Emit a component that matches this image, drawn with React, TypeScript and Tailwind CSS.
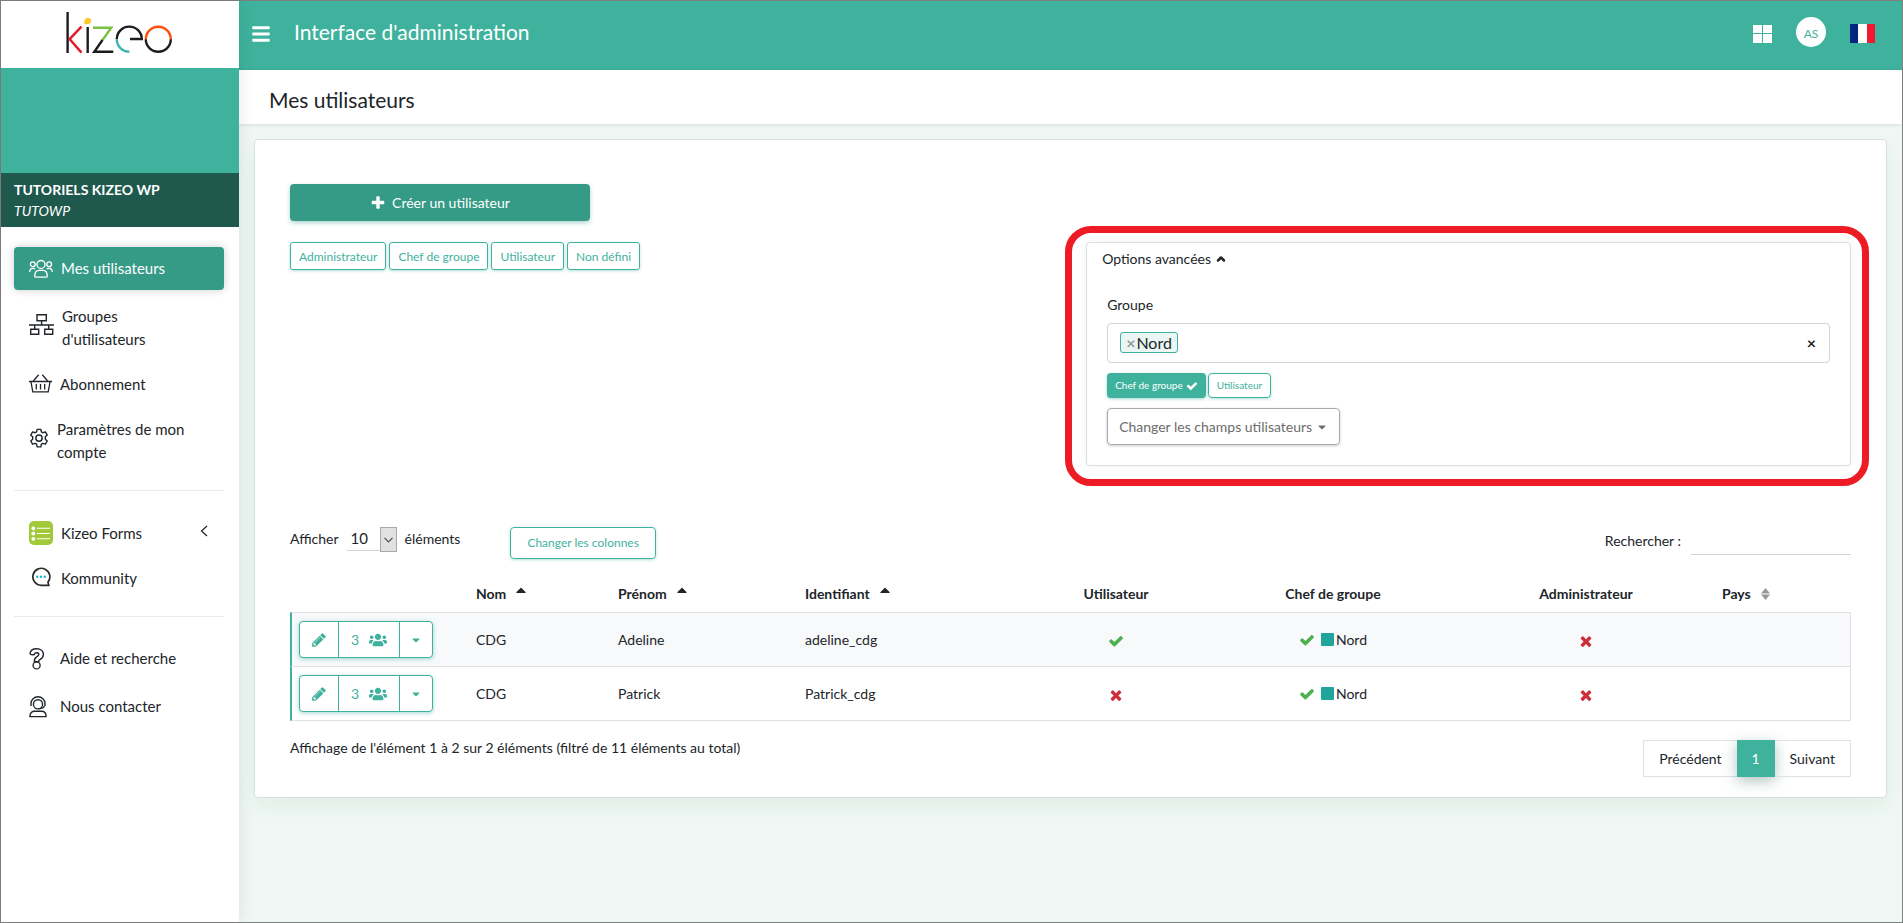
import { type ReactNode } from 'react';
import { FaBars, FaCaretDown, FaCaretUp, FaUsers } from 'react-icons/fa';
import { ChevronUp } from 'lucide-react';

interface User {
  nom: string;
  prenom: string;
  identifiant: string;
  utilisateur: boolean;
  groupe: string;
}

const users: User[] = [
  { nom: 'CDG', prenom: 'Adeline', identifiant: 'adeline_cdg', utilisateur: true, groupe: 'Nord' },
  { nom: 'CDG', prenom: 'Patrick', identifiant: 'Patrick_cdg', utilisateur: false, groupe: 'Nord' },
];

const roles = ['Administrateur', 'Chef de groupe', 'Utilisateur', 'Non défini'];

const glyphs = {
  check:
    'M1671 566q0 40-28 68l-724 724-136 136q-28 28-68 28t-68-28l-136-136-362-362q-28-28-28-68t28-68l136-136q28-28 68-28t68 28l294 295 656-657q28-28 68-28t68 28l136 136q28 28 28 68z',
  times:
    'M1490 1322q0 40-28 68l-136 136q-28 28-68 28t-68-28l-294-294-294 294q-28 28-68 28t-68-28l-136-136q-28-28-28-68t28-68l294-294-294-294q-28-28-28-68t28-68l136-136q28-28 68-28t68 28l294 294 294-294q28-28 68-28t68 28l136 136q28 28 28 68t-28 68l-294 294 294 294q28 28 28 68z',
  plus:
    'M1600 736v192q0 40-28 68t-68 28h-416v416q0 40-28 68t-68 28h-192q-40 0-68-28t-28-68v-416h-416q-40 0-68-28t-28-68v-192q0-40 28-68t68-28h416v-416q0-40 28-68t68-28h192q40 0 68 28t28 68v416h416q40 0 68 28t28 68z',
  pencil:
    'M491 1536l91-91-235-235-91 91v107h128v128h107zm523-928q0-22-22-22-10 0-17 7l-542 542q-7 7-7 17 0 22 22 22 10 0 17-7l542-542q7-7 7-17zm-54-192l416 416-832 832h-416v-416zm683 96q0 53-37 90l-166 166-416-416 166-165q36-38 90-38 53 0 91 38l235 234q37 39 37 91z',
};

function Glyph({ name, className }: { name: keyof typeof glyphs; className: string }) {
  return (
    <svg className={className} viewBox="0 0 1792 1792" fill="currentColor" aria-hidden="true">
      <path d={glyphs[name]} />
    </svg>
  );
}

function Logo() {
  return (
    <svg width="108" height="42" viewBox="0 0 108 42" fill="none" strokeWidth="2.4" role="img" aria-label="kizeo">
      <path d="M1.6 0v41" stroke="#1d1d1d" />
      <path d="M15.500 14.600 3.600 27.100 15.500 40.600" stroke="#e01b2b" />
      <path d="M18.300 12c-.4-2 .2-6.200 3.600-6.200 2 0 3.200 1.400 3.200 3.100 0 2.900-3.200 3.700-6.800 3.100Z" fill="#ffc72c" />
      <path d="M21.700 15V41" stroke="#1d1d1d" />
      <path d="M27 15.800h18.300L36.500 28" stroke="#7cc242" />
      <path d="M36.500 28 28.300 39.700h19" stroke="#1d1d1d" />
      <path d="M50.800 27.200a12.500 12.500 0 0 1 25 -.2H64" stroke="#1d1d1d" />
      <path d="M50.800 27.200a12.500 12.500 0 0 0 12.500 12.500" stroke="#3bb5b0" />
      <path d="M79.800 27.200a12.500 12.500 0 0 1 25 0" stroke="#ff4e0d" />
      <path d="M79.800 27.200a12.500 12.500 0 0 0 25 0" stroke="#1d1d1d" />
    </svg>
  );
}

function TeamIcon() {
  return (
    <svg width="24" height="20" viewBox="0 0 25 20" fill="none" stroke="currentColor" strokeWidth="1.4">
      <circle cx="12.500" cy="5.300" r="4.200" />
      <circle cx="4" cy="5" r="2.500" />
      <circle cx="21" cy="5" r="2.500" />
      <path d="M6 17.200c0-3.700 1.700-5.700 4.500-5.700h4c2.800 0 4.500 2 4.500 5.700 0 .8-.5 1.300-1.300 1.300H7.300c-.8 0-1.300-.5-1.300-1.300Z" />
      <path d="M.8 13c0-2.500 1.200-3.700 3.200-3.700 1 0 1.800.3 2.400.8M24.200 13c0-2.500-1.200-3.700-3.200-3.700-1 0-1.800.3-2.400.8" />
    </svg>
  );
}

function NetworkIcon() {
  return (
    <svg width="25" height="29" viewBox="0 0 25 29" fill="none" stroke="currentColor" strokeWidth="1.4">
      <path d="M8 .8h9.300v6H8zM1.700 15.300h8v5h-8zM15.700 15.300h8v5h-8z" />
      <path d="M12.600 7v4M0 11h25M5.700 11v4M19.700 11v4" />
    </svg>
  );
}

function BasketIcon() {
  return (
    <svg width="23" height="22" viewBox="0 0 23 22" fill="none" stroke="currentColor" strokeWidth="1.3">
      <path d="M0 7.500h23M2 8l1.800 9.800h15.400L21 8" />
      <path d="M4.300 7 9.700.8M18.700 7 13.300.8M7.300 10v5.500M11.500 10v5.500M15.700 10v5.500" />
    </svg>
  );
}

function GearIcon() {
  return (
    <svg width="20" height="26" viewBox="0 0 24 31" fill="none" stroke="currentColor" strokeWidth="1.7" strokeLinejoin="round">
      <path d="M9.800 1.500h4.400l.7 3.100 1.800 1 3-1 2.200 3.800-2.300 2.100v2.900l2.300 2.100-2.200 3.800-3-1-1.800 1-.7 3.200H9.800l-.7-3.200-1.800-1-3 1-2.200-3.800 2.300-2.100v-2.900L2.100 8.400l2.200-3.800 3 1 1.800-1Z" />
      <circle cx="12" cy="12" r="3.800" />
    </svg>
  );
}

function FormsIcon() {
  return (
    <svg width="24" height="24" viewBox="0 0 24 24">
      <rect width="24" height="24" rx="5" fill="#a2c93a" />
      <g fill="#fff">
        <circle cx="4.300" cy="7.300" r="1.900" />
        <circle cx="4.300" cy="12.500" r="1.900" />
        <circle cx="4.300" cy="17.800" r="1.900" />
        <path d="M8 6.800h13v1H8zM8 12h13v1H8zM8 17.300h13v1H8z" />
      </g>
    </svg>
  );
}

function ChatIcon() {
  return (
    <svg width="24" height="23" viewBox="0 0 24 23" fill="none">
      <path d="M18.700 18.300h-6.500a8.500 8.500 0 1 1 6.800-3.200l.8 3.200Z" stroke="#2b2b2b" strokeWidth="1.7" />
      <g fill="#1fb5d6">
        <circle cx="8.300" cy="9.800" r="1.200" />
        <circle cx="12" cy="9.800" r="1.200" />
        <circle cx="15.700" cy="9.800" r="1.200" />
      </g>
    </svg>
  );
}

function HelpIcon() {
  return (
    <svg width="23" height="22" viewBox="0 0 23 22" fill="none" stroke="currentColor" strokeWidth="1.4">
      <path d="M1 5.500C1.500 2.400 4 .8 7.600.8c4 0 6.800 2.200 6.800 5.600 0 3.600-3 4.600-4.100 5.600-.5.500-.5 1.200-.6 1.800H5.400c-.2-2.600.3-3.900 2.300-5C9 8 9.800 7.400 9.800 6.400c0-1-.9-1.700-2.200-1.700-1.500 0-2.100.8-2.300 1.900-1.800.3-4.100.2-4.300-1.100Z" />
      <circle cx="7.600" cy="17.400" r="3.500" />
    </svg>
  );
}

function SupportIcon() {
  return (
    <svg width="23" height="22" viewBox="0 0 23 22" fill="none" stroke="currentColor" strokeWidth="1.4">
      <path d="M2 10V7.500a7 6.700 0 0 1 14 0V10" />
      <circle cx="9" cy="8.300" r="4.600" />
      <path d="M15.500 10c-1 2.400-3.500 2.700-6 2.600M1 20c0-3.200 2-4.800 4.500-4.800h7c2.500 0 4.500 1.600 4.500 4.800v.6H1Z" />
    </svg>
  );
}

function NavItem({ icon, active, expandable, children }: { icon: ReactNode; active?: boolean; expandable?: boolean; children: ReactNode }) {
  return (
    <li>
      <a
        href="#"
        className={`flex items-center gap-2 rounded px-[15px] py-[10px] text-[15px] leading-[23px] ${
          active ? 'mb-[3px] bg-[#359a86] text-white shadow-[0_0_8px_rgba(0,0,0,0.2)]' : 'text-[#212529]'
        }`}
      >
        <span className="flex-shrink-0">{icon}</span>
        <span className="max-w-[136px]">{children}</span>
        {expandable && (
          <svg className="mb-1 ml-auto" width="9" height="12" viewBox="0 0 9 12" fill="none" stroke="currentColor" strokeWidth="1.2">
            <path d="M7 1 1.500 6 7 11" />
          </svg>
        )}
      </a>
    </li>
  );
}

function Sidebar() {
  return (
    <aside className="relative z-10 w-[238px] flex-shrink-0 bg-white shadow-[0_0_16px_rgba(0,0,0,0.1)]">
      <div className="flex h-[67px] items-center justify-center pb-1">
        <Logo />
      </div>
      <div className="h-[105px] bg-[#3fb29d]" />
      <div className="h-[54px] bg-[#1f594d] px-[13px] py-[6px] text-sm leading-[21px] text-white">
        <div className="font-bold">TUTORIELS KIZEO WP</div>
        <div className="italic">TUTOWP</div>
      </div>
      <nav className="pt-5 pr-[15px] pl-[13px]">
        <ul className="flex flex-col gap-[2px]">
          <NavItem icon={<TeamIcon />} active>Mes utilisateurs</NavItem>
          <NavItem icon={<NetworkIcon />}>Groupes d'utilisateurs</NavItem>
          <NavItem icon={<BasketIcon />}>Abonnement</NavItem>
          <NavItem icon={<GearIcon />}>Paramètres de mon compte</NavItem>
        </ul>
        <ul className="mt-4 flex flex-col gap-[2px] border-t border-[#ebebeb] pt-5">
          <NavItem icon={<FormsIcon />} expandable>Kizeo Forms</NavItem>
          <NavItem icon={<ChatIcon />}>Kommunity</NavItem>
        </ul>
        <ul className="mt-4 flex flex-col gap-[5px] border-t border-[#ebebeb] pt-5">
          <NavItem icon={<HelpIcon />}>Aide et recherche</NavItem>
          <NavItem icon={<SupportIcon />}>Nous contacter</NavItem>
        </ul>
      </nav>
    </aside>
  );
}

function Header() {
  return (
    <header className="flex h-[69px] items-center bg-[#3fb29d] pr-[27px] pb-1 pl-[13px] text-white">
      <button type="button" aria-label="Menu">
        <FaBars className="h-5 w-[18px]" />
      </button>
      <span className="ml-6 pb-1 text-[21px]">Interface d'administration</span>
      <div className="ml-auto flex items-center gap-6">
        <button type="button" aria-label="Applications">
          <svg width="19" height="18" viewBox="0 0 19 18" fill="currentColor">
            <path d="M0 0h9v8H0zM10 0h9v8h-9zM0 9h9v9H0zM10 9h9v9h-9z" />
          </svg>
        </button>
        <button type="button" className="mb-1 h-[30px] w-[30px] rounded-full bg-white pt-1 text-xs text-[#3fb29d]">
          AS
        </button>
        <button type="button" aria-label="Français">
          <svg width="25" height="19" viewBox="0 0 25 19">
            <path d="M0 0h25v19H0z" fill="#fff" />
            <path d="M0 0h8v19H0z" fill="#00267f" />
            <path d="M17 0h8v19h-8z" fill="#f31830" />
          </svg>
        </button>
      </div>
    </header>
  );
}

function AdvancedOptions() {
  return (
    <section className="relative w-[49%] rounded border border-[#d6dfe2] bg-white px-4 pb-5 shadow-[0_0_12px_rgba(0,0,0,0.05)]">
      <div className="pointer-events-none absolute -top-[17px] -right-[19px] -bottom-[21px] -left-[22px] rounded-[26px] border-[7px] border-[#ed1c24]" />
      <button type="button" className="-ml-px flex h-8 items-center gap-1">
        Options avancées <ChevronUp className="h-3 w-3" strokeWidth={5} />
      </button>
      <div className="mt-5 ml-1 pr-1">
        <label htmlFor="groupe" className="block leading-5">Groupe</label>
        <div className="mt-2 flex h-10 items-center rounded border border-[#ced4da] pr-[13px] pb-px pl-3">
          <span className="flex h-[21px] flex-shrink-0 items-center rounded-[3px] border border-[#3fb29d] bg-[#eaf6f3] px-[5px] text-base">
            <button type="button" aria-label="Retirer Nord" className="mr-px font-bold text-[#999999]">×</button>
            Nord
          </span>
          <input id="groupe" type="text" className="min-w-0 flex-1 px-2 outline-none" />
          <button type="button" aria-label="Tout effacer" className="text-base font-bold">×</button>
        </div>
        <div className="mt-[10px] flex gap-[2px] text-[10px]">
          <button type="button" className="flex h-[25px] items-center gap-[3px] rounded bg-[#3fb29d] px-2 text-white shadow-[0_1px_3px_rgba(63,178,157,0.5)]">
            Chef de groupe <Glyph name="check" className="h-3 w-3" />
          </button>
          <button type="button" className="h-[25px] rounded border border-[#3fb29d] px-2 text-[#3fb29d] shadow-[0_1px_3px_rgba(63,178,157,0.4)]">
            Utilisateur
          </button>
        </div>
        <button type="button" className="mt-[10px] flex h-[37px] items-center gap-1 rounded border border-[#a9a9a9] px-[11px] text-[#6c6c6c] shadow-[0_1px_3px_rgba(0,0,0,0.2)]">
          Changer les champs utilisateurs <FaCaretDown className="h-3 w-3" />
        </button>
      </div>
    </section>
  );
}

function SortedHeader({ children }: { children: ReactNode }) {
  return (
    <th className="pl-3 text-left">
      <span className="flex items-center gap-2">
        {children} <FaCaretUp className="mb-2 h-4 w-[14px]" />
      </span>
    </th>
  );
}

function Status({ ok }: { ok: boolean }) {
  return (
    <span role="img" aria-label={ok ? 'Oui' : 'Non'} className={`inline-block align-middle ${ok ? 'text-[#4caf50]' : 'text-[#cb2f3c]'}`}>
      <Glyph name={ok ? 'check' : 'times'} className="h-4 w-4" />
    </span>
  );
}

function UsersTable() {
  return (
    <table className="mt-4 w-full table-fixed border-separate border-spacing-0">
      <colgroup>
        <col className="w-[174px]" />
        <col className="w-[142px]" />
        <col className="w-[187px]" />
        <col className="w-[235px]" />
        <col className="w-[176px]" />
        <col className="w-[258px]" />
        <col className="w-[248px]" />
        <col className="w-[141px]" />
      </colgroup>
      <thead>
        <tr className="h-[37px]">
          <td />
          <SortedHeader>Nom</SortedHeader>
          <SortedHeader>Prénom</SortedHeader>
          <SortedHeader>Identifiant</SortedHeader>
          <th>Utilisateur</th>
          <th>Chef de groupe</th>
          <th>Administrateur</th>
          <th className="pl-3 text-left">
            <span className="flex items-center gap-[10px]">
              Pays
              <svg width="9" height="12" viewBox="0 0 9 12" fill="#999999">
                <path d="M4.500 0 9 5.500H0zM4.500 12 0 6.500h9z" />
              </svg>
            </span>
          </th>
        </tr>
      </thead>
      <tbody>
        {users.map((user) => (
          <tr
            key={user.identifiant}
            className="h-[54px] odd:bg-[#f8f9fb] last:h-[55px] [&>td]:border-t [&>td]:border-[#dee2e6] last:[&>td]:border-b"
          >
            <td className="border-l-2 border-l-[#3fb29d]! pl-[7px]">
              <div className="inline-flex h-[37px] divide-x divide-[#3fb29d] rounded border border-[#3fb29d] bg-white align-middle text-[#3fb29d] shadow-[0_1px_4px_rgba(63,178,157,0.5)]">
                <button type="button" aria-label="Modifier" className="px-[11px]">
                  <Glyph name="pencil" className="h-4 w-4" />
                </button>
                <button type="button" className="flex items-center gap-[10px] px-3">
                  3 <FaUsers className="h-[18px] w-[18px]" />
                </button>
                <button type="button" aria-label="Plus d'actions" className="px-[10px]">
                  <FaCaretDown className="h-3 w-3" />
                </button>
              </div>
            </td>
            <td className="pl-3">{user.nom}</td>
            <td className="pl-3">{user.prenom}</td>
            <td className="pl-3">{user.identifiant}</td>
            <td className="text-center"><Status ok={user.utilisateur} /></td>
            <td>
              <div className="flex items-center justify-center">
                <Status ok />
                <span className="mr-[2px] ml-[6px] h-[13px] w-[13px] rounded-[1px] bg-[#20a49b]" />
                {user.groupe}
              </div>
            </td>
            <td className="text-center"><Status ok={false} /></td>
            <td className="border-r" />
          </tr>
        ))}
      </tbody>
    </table>
  );
}

export default function App() {
  return (
    <div className="flex min-h-screen border border-[#808080] bg-[#eff8f4] font-['Lato',sans-serif] text-sm text-[#212529]">
      <Sidebar />
      <div className="min-w-0 flex-1">
        <Header />
        <div className="flex h-[54px] items-center bg-white px-[30px] pt-[6px] shadow-[0_1px_4px_rgba(0,0,0,0.1)]">
          <h1 className="text-[21px]">Mes utilisateurs</h1>
        </div>
        <main className="m-[15px] rounded border border-[#d6dfe2] bg-white px-[35px] pt-11 pb-5 shadow-[0_8px_24px_rgba(0,60,40,0.06)]">
          <button type="button" className="flex h-[37px] w-[300px] items-center justify-center gap-[6px] rounded bg-[#359a86] text-white shadow-[0_2px_4px_rgba(53,154,134,0.4)]">
            <Glyph name="plus" className="h-4 w-4" /> Créer un utilisateur
          </button>
          <div className="mt-[21px] flex items-start justify-between">
            <div className="flex gap-[3px] text-xs">
              {roles.map((role) => (
                <button key={role} type="button" className="h-7 rounded-[3px] border border-[#3fb29d] px-2 pt-px text-[#3fb29d] shadow-[0_1px_3px_rgba(63,178,157,0.4)]">
                  {role}
                </button>
              ))}
            </div>
            <AdvancedOptions />
          </div>

          <div className="mt-[61px] flex items-start">
            <label htmlFor="longueur" className="leading-6">Afficher</label>
            <div className="relative mx-2">
              <select id="longueur" className="h-6 w-[50px] appearance-none border-b border-[#ced4da] pl-1 text-[15px] outline-none">
                <option>10</option>
              </select>
              <span className="pointer-events-none absolute top-0 right-0 flex h-[25px] w-[17px] items-center justify-center border border-[#a9a9a9] bg-[#e1e1e1]">
                <svg width="9" height="6" viewBox="0 0 9 6" fill="none" stroke="#505050" strokeWidth="1.2">
                  <path d="m.5.8 4 4 4-4" />
                </svg>
              </span>
            </div>
            <span className="leading-6">éléments</span>
            <button type="button" className="ml-[50px] h-8 rounded border border-[#3fb29d] px-4 text-xs text-[#3fb29d] shadow-[0_1px_3px_rgba(63,178,157,0.4)]">
              Changer les colonnes
            </button>
            <label htmlFor="recherche" className="ml-auto leading-7">Rechercher :</label>
            <input id="recherche" type="text" className="ml-[10px] h-7 w-40 border-b border-[#ced4da] outline-none" />
          </div>

          <UsersTable />

          <div className="mt-[19px] flex items-start justify-between">
            <p className="leading-4">Affichage de l'élément 1 à 2 sur 2 éléments (filtré de 11 éléments au total)</p>
            <div className="flex h-[37px]">
              <button type="button" className="border border-r-0 border-[#dee2e6] px-[15px]">Précédent</button>
              <button type="button" className="w-[38px] bg-[#3fb29d] text-white shadow-[0_4px_14px_rgba(31,89,77,0.35)]">1</button>
              <button type="button" className="border border-l-0 border-[#dee2e6] px-[15px]">Suivant</button>
            </div>
          </div>
        </main>
      </div>
    </div>
  );
}
